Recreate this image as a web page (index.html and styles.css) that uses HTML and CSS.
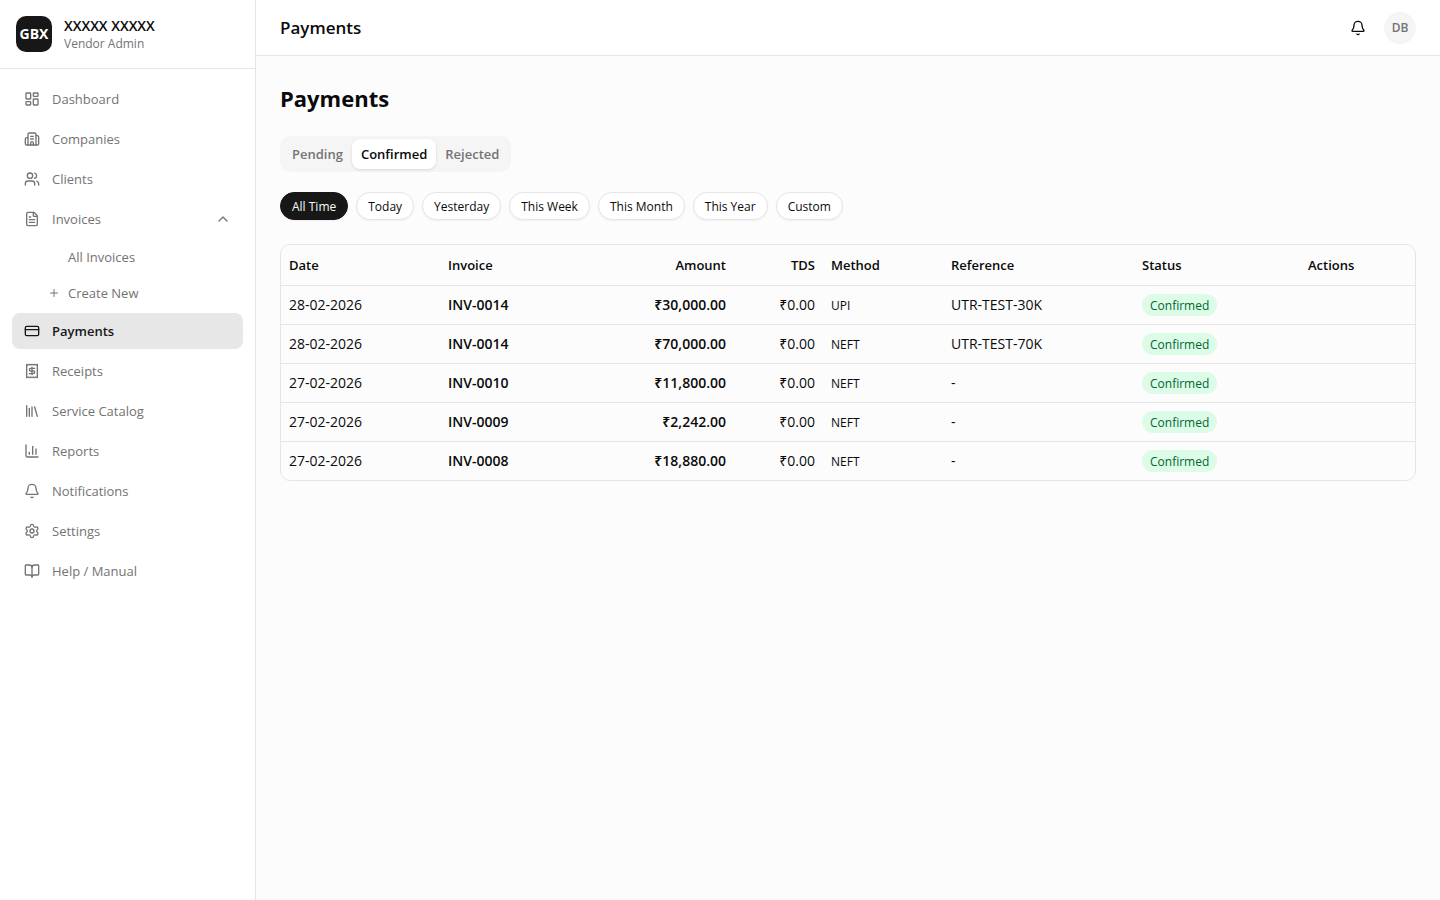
FILE: index.html
```html
<!DOCTYPE html>
<html lang="en">

<head>
    <meta charset="UTF-8">
    <meta name="viewport" content="width=device-width, initial-scale=1.0">
    <title>Payments</title>
    <link rel="stylesheet" href="styles.css">
</head>

<body>
    <aside class="sidebar">
        <div class="brand">
            <div class="brand-logo">GBX</div>
            <div>
                <div class="brand-name">XXXXX XXXXX</div>
                <div class="brand-role">Vendor Admin</div>
            </div>
        </div>

        <nav class="nav">
            <a class="nav-link" href="#">
                <svg class="icon" viewBox="0 0 24 24"><rect width="7" height="9" x="3" y="3" rx="1"/><rect width="7" height="5" x="14" y="3" rx="1"/><rect width="7" height="9" x="14" y="12" rx="1"/><rect width="7" height="5" x="3" y="16" rx="1"/></svg>
                Dashboard
            </a>
            <a class="nav-link" href="#">
                <svg class="icon" viewBox="0 0 24 24"><path d="M10 12h4"/><path d="M10 8h4"/><path d="M14 21v-3a2 2 0 0 0-4 0v3"/><path d="M6 10H4a2 2 0 0 0-2 2v7a2 2 0 0 0 2 2h16a2 2 0 0 0 2-2V9a2 2 0 0 0-2-2h-2"/><path d="M6 21V5a2 2 0 0 1 2-2h8a2 2 0 0 1 2 2v16"/></svg>
                Companies
            </a>
            <a class="nav-link" href="#">
                <svg class="icon" viewBox="0 0 24 24"><path d="M16 21v-2a4 4 0 0 0-4-4H6a4 4 0 0 0-4 4v2"/><path d="M16 3.128a4 4 0 0 1 0 7.744"/><path d="M22 21v-2a4 4 0 0 0-3-3.87"/><circle cx="9" cy="7" r="4"/></svg>
                Clients
            </a>
            <button class="nav-link" type="button" aria-expanded="true">
                <svg class="icon" viewBox="0 0 24 24"><path d="M6 22a2 2 0 0 1-2-2V4a2 2 0 0 1 2-2h8a2.4 2.4 0 0 1 1.704.706l3.588 3.588A2.4 2.4 0 0 1 20 8v12a2 2 0 0 1-2 2z"/><path d="M14 2v5a1 1 0 0 0 1 1h5"/><path d="M10 9H8"/><path d="M16 13H8"/><path d="M16 17H8"/></svg>
                Invoices
                <svg class="icon chevron" viewBox="0 0 24 24"><path d="m18 15-6-6-6 6"/></svg>
            </button>
            <div class="subnav">
                <a class="subnav-link" href="#">All Invoices</a>
                <a class="subnav-link with-icon" href="#">
                    <svg class="icon icon-sm" viewBox="0 0 24 24"><path d="M5 12h14"/><path d="M12 5v14"/></svg>
                    Create New
                </a>
            </div>
            <a class="nav-link active" href="#" aria-current="page">
                <svg class="icon" viewBox="0 0 24 24"><rect width="20" height="14" x="2" y="5" rx="2"/><path d="M2 10h20"/></svg>
                Payments
            </a>
            <a class="nav-link" href="#">
                <svg class="icon" viewBox="0 0 24 24"><path d="M4 2v20l2-1 2 1 2-1 2 1 2-1 2 1 2-1 2 1V2l-2 1-2-1-2 1-2-1-2 1-2-1-2 1Z"/><path d="M16 8h-6a2 2 0 1 0 0 4h4a2 2 0 1 1 0 4H8"/><path d="M12 17.5v-11"/></svg>
                Receipts
            </a>
            <a class="nav-link" href="#">
                <svg class="icon" viewBox="0 0 24 24"><path d="m16 6 4 14"/><path d="M12 6v14"/><path d="M8 8v12"/><path d="M4 4v16"/></svg>
                Service Catalog
            </a>
            <a class="nav-link" href="#">
                <svg class="icon" viewBox="0 0 24 24"><path d="M3 3v16a2 2 0 0 0 2 2h16"/><path d="M18 17V9"/><path d="M13 17V5"/><path d="M8 17v-3"/></svg>
                Reports
            </a>
            <a class="nav-link" href="#">
                <svg class="icon" viewBox="0 0 24 24"><path d="M10.268 21a2 2 0 0 0 3.464 0"/><path d="M3.262 15.326A1 1 0 0 0 4 17h16a1 1 0 0 0 .74-1.673C19.41 13.956 18 12.499 18 8A6 6 0 0 0 6 8c0 4.499-1.411 5.956-2.738 7.326"/></svg>
                Notifications
            </a>
            <a class="nav-link" href="#">
                <svg class="icon" viewBox="0 0 24 24"><path d="M9.671 4.136a2.34 2.34 0 0 1 4.659 0 2.34 2.34 0 0 0 3.319 1.915 2.34 2.34 0 0 1 2.33 4.033 2.34 2.34 0 0 0 0 3.831 2.34 2.34 0 0 1-2.33 4.033 2.34 2.34 0 0 0-3.319 1.915 2.34 2.34 0 0 1-4.659 0 2.34 2.34 0 0 0-3.32-1.915 2.34 2.34 0 0 1-2.33-4.033 2.34 2.34 0 0 0 0-3.831A2.34 2.34 0 0 1 6.35 6.051a2.34 2.34 0 0 0 3.319-1.915"/><circle cx="12" cy="12" r="3"/></svg>
                Settings
            </a>
            <a class="nav-link" href="#">
                <svg class="icon" viewBox="0 0 24 24"><path d="M12 7v14"/><path d="M3 18a1 1 0 0 1-1-1V4a1 1 0 0 1 1-1h5a4 4 0 0 1 4 4 4 4 0 0 1 4-4h5a1 1 0 0 1 1 1v13a1 1 0 0 1-1 1h-6a3 3 0 0 0-3 3 3 3 0 0 0-3-3z"/></svg>
                Help / Manual
            </a>
        </nav>
    </aside>

    <div class="page">
        <header class="topbar">
            <div class="topbar-title">Payments</div>
            <div class="topbar-actions">
                <button class="icon-button" type="button" aria-label="Notifications">
                    <svg class="icon" viewBox="0 0 24 24"><path d="M10.268 21a2 2 0 0 0 3.464 0"/><path d="M3.262 15.326A1 1 0 0 0 4 17h16a1 1 0 0 0 .74-1.673C19.41 13.956 18 12.499 18 8A6 6 0 0 0 6 8c0 4.499-1.411 5.956-2.738 7.326"/></svg>
                </button>
                <button class="avatar" type="button">DB</button>
            </div>
        </header>

        <main class="content">
            <h1>Payments</h1>

            <div class="tabs" role="tablist">
                <button class="tab" type="button" role="tab">Pending</button>
                <button class="tab active" type="button" role="tab" aria-selected="true">Confirmed</button>
                <button class="tab" type="button" role="tab">Rejected</button>
            </div>

            <div class="filters">
                <button class="chip active" type="button">All Time</button>
                <button class="chip" type="button">Today</button>
                <button class="chip" type="button">Yesterday</button>
                <button class="chip" type="button">This Week</button>
                <button class="chip" type="button">This Month</button>
                <button class="chip" type="button">This Year</button>
                <button class="chip" type="button">Custom</button>
            </div>

            <div class="table-wrap">
                <table>
                    <thead>
                        <tr>
                            <th class="col-date">Date</th>
                            <th class="col-invoice">Invoice</th>
                            <th class="col-amount num">Amount</th>
                            <th class="col-tds num">TDS</th>
                            <th class="col-method">Method</th>
                            <th class="col-reference">Reference</th>
                            <th class="col-status">Status</th>
                            <th class="col-actions">Actions</th>
                        </tr>
                    </thead>
                    <tbody>
                        <tr>
                            <td>28-02-2026</td>
                            <td class="strong">INV-0014</td>
                            <td class="strong num">₹30,000.00</td>
                            <td class="num">₹0.00</td>
                            <td class="small">UPI</td>
                            <td>UTR-TEST-30K</td>
                            <td><span class="badge">Confirmed</span></td>
                            <td></td>
                        </tr>
                        <tr>
                            <td>28-02-2026</td>
                            <td class="strong">INV-0014</td>
                            <td class="strong num">₹70,000.00</td>
                            <td class="num">₹0.00</td>
                            <td class="small">NEFT</td>
                            <td>UTR-TEST-70K</td>
                            <td><span class="badge">Confirmed</span></td>
                            <td></td>
                        </tr>
                        <tr>
                            <td>27-02-2026</td>
                            <td class="strong">INV-0010</td>
                            <td class="strong num">₹11,800.00</td>
                            <td class="num">₹0.00</td>
                            <td class="small">NEFT</td>
                            <td>-</td>
                            <td><span class="badge">Confirmed</span></td>
                            <td></td>
                        </tr>
                        <tr>
                            <td>27-02-2026</td>
                            <td class="strong">INV-0009</td>
                            <td class="strong num">₹2,242.00</td>
                            <td class="num">₹0.00</td>
                            <td class="small">NEFT</td>
                            <td>-</td>
                            <td><span class="badge">Confirmed</span></td>
                            <td></td>
                        </tr>
                        <tr>
                            <td>27-02-2026</td>
                            <td class="strong">INV-0008</td>
                            <td class="strong num">₹18,880.00</td>
                            <td class="num">₹0.00</td>
                            <td class="small">NEFT</td>
                            <td>-</td>
                            <td><span class="badge">Confirmed</span></td>
                            <td></td>
                        </tr>
                    </tbody>
                </table>
            </div>
        </main>
    </div>
</body>

</html>
```
FILE: styles.css
```css
* {
    box-sizing: border-box;
}

body {
    display: flex;
    min-height: 100vh;
    margin: 0;
    font-family: "Open Sans", "Noto Sans", sans-serif;
    font-size: 14px;
    line-height: 20px;
    color: #0a0a0a;
    background-color: #fcfcfc;
}

a {
    color: inherit;
    text-decoration: none;
}

button {
    padding: 0;
    border: none;
    background: none;
    font: inherit;
    color: inherit;
    cursor: pointer;
}

.icon {
    flex: none;
    width: 16px;
    height: 16px;
    fill: none;
    stroke: currentColor;
    stroke-width: 2;
    stroke-linecap: round;
    stroke-linejoin: round;
}

.icon-sm {
    width: 12px;
    height: 12px;
}

/* Sidebar */
.sidebar {
    flex: none;
    width: 256px;
    background-color: #fff;
    border-right: 1px solid #e5e5e5;
}

.brand {
    display: flex;
    align-items: center;
    gap: 12px;
    padding: 16px;
    border-bottom: 1px solid #e5e5e5;
}

.brand-logo {
    display: flex;
    align-items: center;
    justify-content: center;
    width: 36px;
    height: 36px;
    border-radius: 10px;
    background-color: #171717;
    color: #fff;
    font-weight: 700;
}

.brand-name {
    font-weight: 600;
}

.brand-role {
    font-size: 12px;
    line-height: 16px;
    color: #737373;
}

.nav {
    display: flex;
    flex-direction: column;
    gap: 4px;
    padding: 12px;
    font-size: 13px;
}

.nav-link {
    display: flex;
    align-items: center;
    gap: 12px;
    padding: 8px 12px;
    border-radius: 8px;
    color: #737373;
}

.nav-link.active {
    background-color: #e7e7e7;
    color: #171717;
    font-weight: 600;
}

.chevron {
    margin-left: auto;
}

.subnav {
    display: flex;
    flex-direction: column;
    gap: 4px;
}

.subnav-link {
    display: flex;
    align-items: center;
    gap: 8px;
    padding: 6px 12px 6px 56px;
    border-radius: 8px;
    color: #737373;
}

.subnav-link.with-icon {
    padding-left: 36px;
}

/* Top bar */
.page {
    flex: 1;
    min-width: 0;
}

.topbar {
    display: flex;
    align-items: center;
    justify-content: space-between;
    height: 56px;
    padding: 0 24px;
    background-color: #fff;
    border-bottom: 1px solid #e5e5e5;
}

.topbar-title {
    font-size: 17px;
    line-height: 28px;
    font-weight: 600;
}

.topbar-actions {
    display: flex;
    align-items: center;
    gap: 8px;
}

.icon-button {
    display: flex;
    align-items: center;
    justify-content: center;
    width: 36px;
    height: 36px;
}

.avatar {
    width: 32px;
    height: 32px;
    border-radius: 50%;
    background-color: #f5f5f5;
    color: #737373;
    font-size: 12px;
    font-weight: 600;
}

/* Content */
.content {
    padding: 24px;
}

h1 {
    margin: 0 0 20px;
    font-size: 22px;
    line-height: 36px;
    font-weight: 700;
}

.tabs {
    display: flex;
    width: fit-content;
    height: 36px;
    margin-bottom: 20px;
    padding: 3px;
    border-radius: 10px;
    background-color: #f5f5f5;
}

.tab {
    padding: 0 9px;
    border-radius: 8px;
    color: #737373;
    font-size: 13px;
    font-weight: 600;
}

.tab.active {
    background-color: #fff;
    color: #0a0a0a;
    box-shadow: 0 1px 3px rgba(0, 0, 0, 0.12);
}

.filters {
    display: flex;
    flex-wrap: wrap;
    gap: 8px;
    margin-bottom: 24px;
}

.chip {
    height: 28px;
    padding: 1px 11px 0;
    border: 1px solid #e5e5e5;
    border-radius: 14px;
    background-color: #fff;
    box-shadow: 0 1px 2px rgba(0, 0, 0, 0.05);
    font-size: 12px;
    line-height: 16px;
    font-weight: 500;
}

.chip.active {
    border-color: #171717;
    background-color: #171717;
    color: #fafafa;
}

.table-wrap {
    overflow: auto;
    border: 1px solid #e5e5e5;
    border-radius: 10px;
}

table {
    width: 100%;
    table-layout: fixed;
    border-spacing: 0;
}

th,
td {
    height: 39px;
    padding: 0 8px;
    border-bottom: 1px solid #e5e5e5;
    text-align: left;
    white-space: nowrap;
}

th {
    height: 41px;
    font-size: 13px;
    font-weight: 600;
}

tbody tr:last-child td {
    height: 38px;
    border-bottom: none;
}

th.num,
td.num {
    text-align: right;
}

.strong {
    font-weight: 600;
}

.small {
    padding-top: 2px;
    font-size: 12px;
}

.col-date {
    width: 159px;
}

.col-invoice {
    width: 148px;
}

.col-amount {
    width: 146px;
}

.col-tds {
    width: 89px;
}

.col-method {
    width: 120px;
}

.col-reference {
    width: 191px;
}

.col-status {
    width: 166px;
}

.col-actions {
    width: 115px;
}

.badge {
    display: inline-block;
    padding: 4px 8px 2px;
    border-radius: 11px;
    background-color: #dcfce7;
    color: #016630;
    font-size: 12px;
    line-height: 16px;
    font-weight: 500;
    vertical-align: middle;
}
```
